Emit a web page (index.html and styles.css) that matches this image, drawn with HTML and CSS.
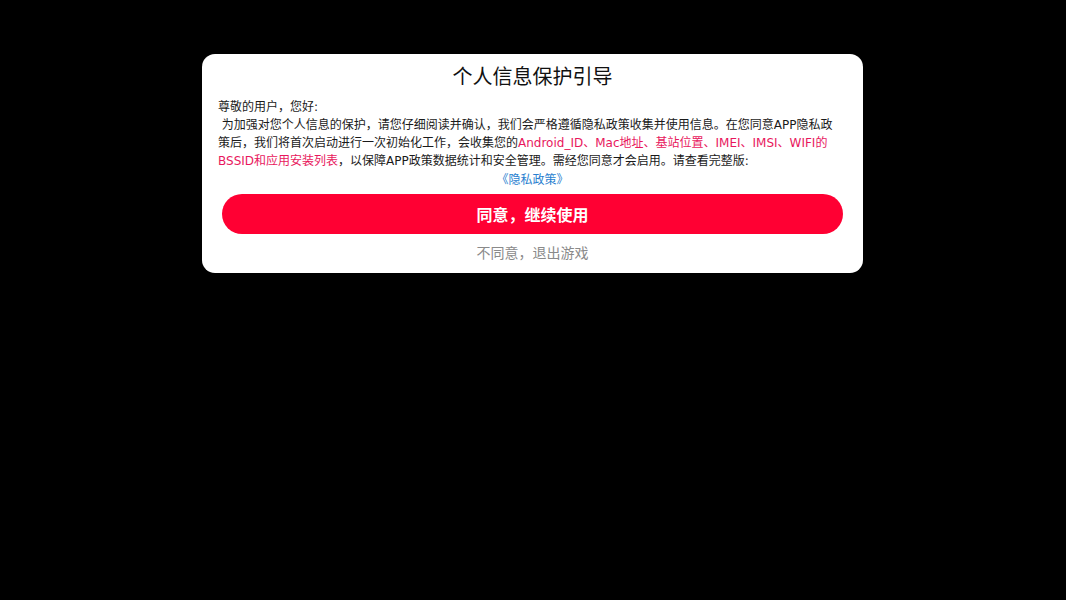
FILE: index.html
```html
<!DOCTYPE html>
<html lang="zh-CN">
<head>
<meta charset="utf-8">
<title>个人信息保护引导</title>
<link rel="stylesheet" href="styles.css">
</head>
<body>
<div class="dialog">
  <h1 class="title">个人信息保护引导</h1>
  <div class="body">
    <p class="line">尊敬的用户，您好:</p>
    <p class="line">&nbsp;为加强对您个人信息的保护，请您仔细阅读并确认，我们会严格遵循隐私政策收集并使用信息。在您同意APP隐私政策后，我们将首次启动进行一次初始化工作，会收集您的<span class="hl">Android_ID、Mac地址、基站位置、IMEI、IMSI、WIFI的BSSID和应用安装列表</span>，以保障APP政策数据统计和安全管理。需经您同意才会启用。请查看完整版:</p>
  </div>
  <div class="link-line"><a class="link">《隐私政策》</a></div>
  <button class="agree">同意，继续使用</button>
  <div class="refuse">不同意，退出游戏</div>
</div>
</body>
</html>
```
FILE: styles.css
```css
html, body {
  margin: 0;
  padding: 0;
  background: #000;
  width: 1066px;
  height: 600px;
  overflow: hidden;
  font-family: Roboto, "Noto Sans CJK SC", sans-serif;
}
.dialog {
  width: 661px;
  margin: 54px 0 0 202px;
  background: #fff;
  border-radius: 13px;
  padding: 9px 0 10px;
  box-sizing: border-box;
  display: flex;
  flex-direction: column;
}
.title {
  margin: 0;
  font-size: 20px;
  font-weight: 400;
  line-height: 28px;
  text-align: center;
  color: #111;
}
.body {
  margin: 6.5px 0 0 16px;
  width: 616px;
  font-family: "DejaVu Sans", "Noto Sans CJK SC", sans-serif;
  font-size: 12px;
  line-height: 18.2px;
  color: #1a1a1a;
}
.line {
  margin: 0;
}
.hl {
  color: #e8175d;
}
.link-line {
  text-align: center;
  font-family: "Noto Sans CJK SC", sans-serif;
  font-size: 12px;
  line-height: 18.2px;
}
.link {
  color: #2a7fd0;
}
.agree {
  margin: 5.5px 20px 0;
  height: 40px;
  border: none;
  border-radius: 20px;
  background: #ff0033;
  color: #fff;
  font-family: Roboto, "Noto Sans CJK SC", sans-serif;
  font-size: 16px;
  font-weight: 700;
  padding: 0;
}
.refuse {
  margin-top: 9px;
  text-align: center;
  font-size: 14px;
  line-height: 20px;
  color: #8a8a8a;
}
```
